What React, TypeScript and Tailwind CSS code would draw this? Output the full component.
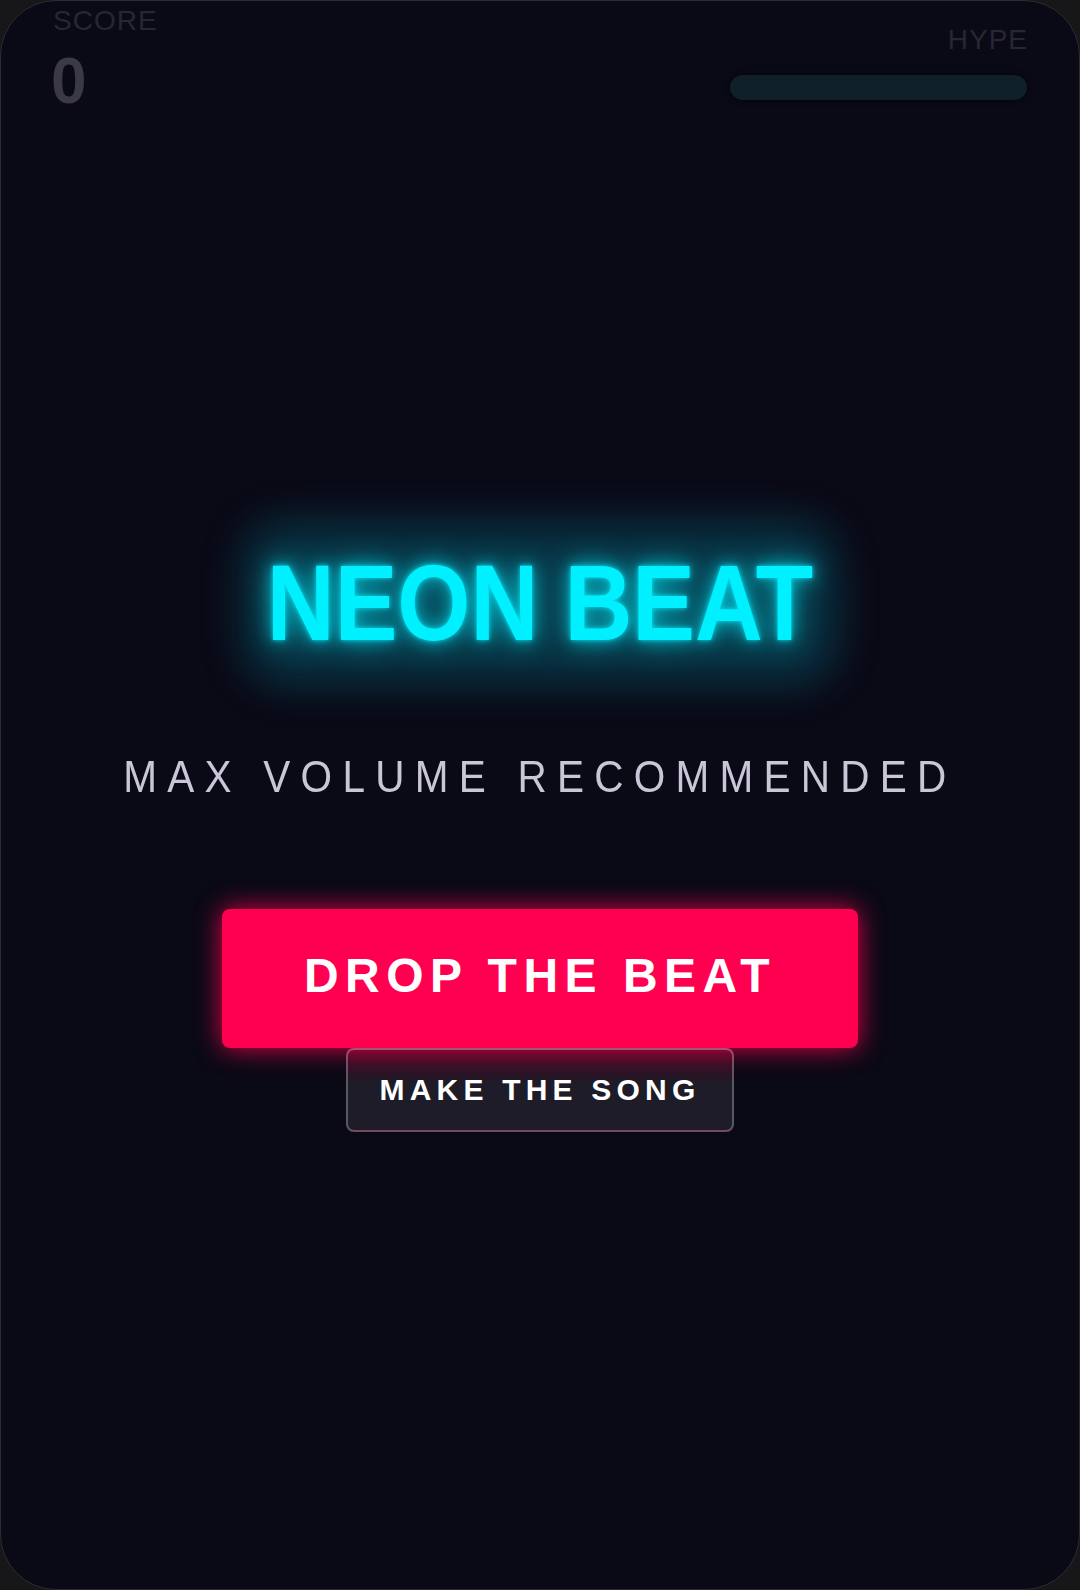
import React from "react";

export default function App() {
  return (
    <div className="w-[1080px] h-[1590px] bg-[#17171a] overflow-hidden">
      <div className="w-full h-full rounded-[56px] bg-[#0a0916] border border-[#2c2c30] flex flex-col font-['Liberation_Sans',Arial,sans-serif]">
        <header className="flex justify-between items-start px-[52px] pt-[6px]">
          <div className="flex flex-col">
            <div className="text-[28px] leading-none tracking-[1px] text-[#272633]">SCORE</div>
            <div className="mt-[14px] -ml-[2px] text-[64px] leading-none font-bold text-[#3a3945]">0</div>
          </div>
          <div className="flex flex-col items-end pt-[19px]">
            <div className="text-[28px] leading-none tracking-[1px] text-[#272633] -mr-[1px]">HYPE</div>
            <div className="mt-[21px] w-[297px] h-[25px] rounded-full bg-[#0f2029] shadow-[0_0_6px_rgba(0,0,0,0.6)]" />
          </div>
        </header>
        <main className="flex flex-col items-center pt-[436px]">
          <div className="relative">
            <div className="absolute inset-x-[18px] -inset-y-[26px] rounded-[40px] bg-[rgba(0,215,240,0.22)] blur-[22px]" />
            <h1 className="relative inline-block scale-x-[0.87] font-bold text-[108px] leading-none text-[#00f0ff] [text-shadow:0_0_6px_rgba(0,240,255,0.8),0_0_18px_rgba(0,240,255,0.65),0_0_34px_rgba(0,240,255,0.5)]">
              NEON BEAT
            </h1>
          </div>
          <p className="mt-[97px] inline-block scale-x-[0.9] text-[45px] leading-none tracking-[11.4px] text-[#c9c7d7]">
            MAX VOLUME RECOMMENDED
          </p>
          <button className="mt-[110px] w-[636px] h-[139px] rounded-[8px] bg-[#ff0050] shadow-[0_0_26px_rgba(255,0,80,0.9)] flex items-center justify-center pb-[6px]">
            <span className="text-[48px] leading-none font-bold text-white tracking-[6.5px]">DROP THE BEAT</span>
          </button>
          <button className="w-[388px] h-[84px] rounded-[8px] bg-[linear-gradient(to_bottom,rgba(255,0,80,0.22),rgba(255,255,255,0.08)_45%)] border-2 border-[rgba(255,255,255,0.27)] flex items-center justify-center">
            <span className="text-[30px] leading-none font-bold text-white tracking-[5.2px]">MAKE THE SONG</span>
          </button>
        </main>
      </div>
    </div>
  );
}
